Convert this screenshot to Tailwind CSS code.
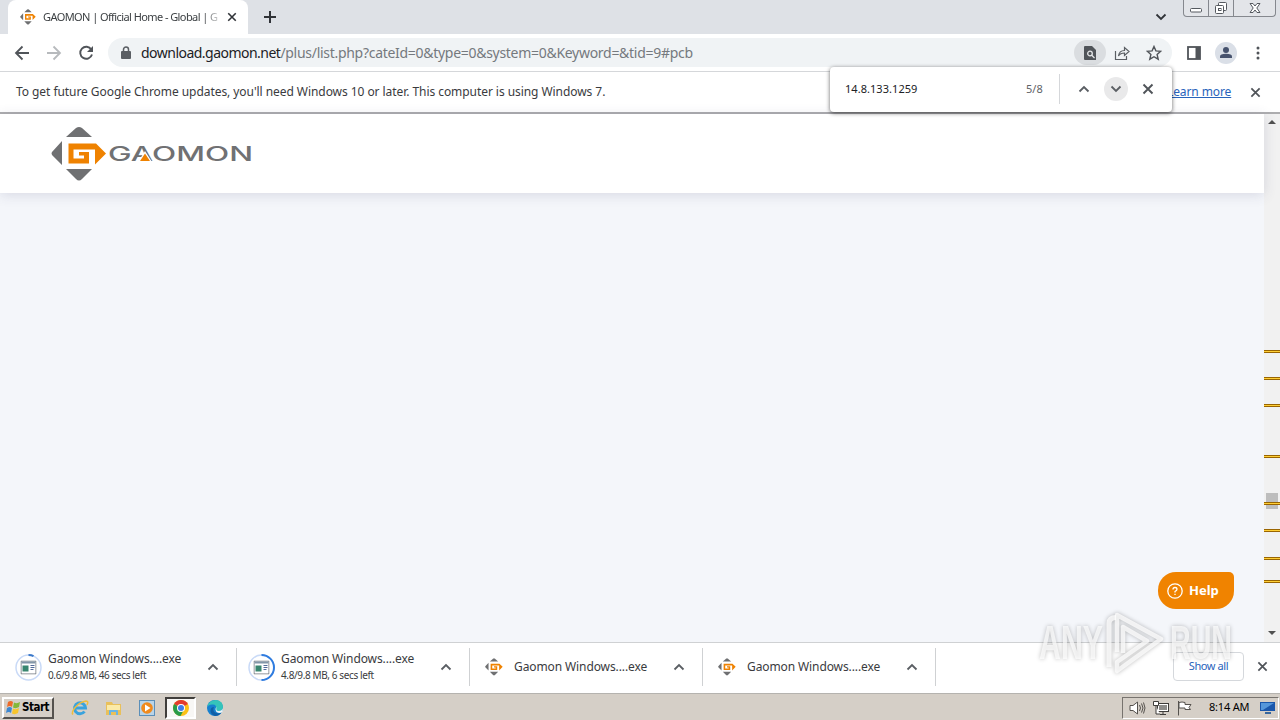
<!DOCTYPE html>
<html lang="en">
<head>
<meta charset="utf-8">
<title>GAOMON | Official Home - Global</title>
<script src="https://cdn.jsdelivr.net/npm/@tailwindcss/browser@4"></script>
</head>
<body class="w-[1280px] h-[720px] overflow-hidden bg-white font-['Noto_Sans','Open_Sans',sans-serif] text-[#3a3b3e]">
<svg class="hidden">
  <symbol id="mark" viewBox="0 0 56 56">
    <g fill="#6f7072"><path d="M15 11 25 2q3-2 6 0l10 9z"/><path d="M15 43h26L31 53q-3 3-6 0z"/><path d="M11 15v24L1 29q-1-2 0-3z"/></g>
    <path fill="#ef8200" d="M17.500 17.500H45L55 27.500 44 38.500V23.500H22.500V32.500H33V29.500H28v-3.500h10V37.500H17.500z"/>
  </symbol>
  <symbol id="up" viewBox="0 0 12 12"><path d="m1.500 8.500 4.500-4.500 4.500 4.500" fill="none" stroke="currentColor" stroke-width="1.800"/></symbol>
  <symbol id="x" viewBox="0 0 12 12"><path d="m1.500 1.500 9 9m0-9-9 9" fill="none" stroke="currentColor" stroke-width="1.900"/></symbol>
  <symbol id="app" viewBox="0 0 16 14"><path d="M.5.5h15v13H.5z" fill="#fff" stroke="#70777e"/><path d="M1 1h14v2H1z" fill="#8296a8"/><path d="M2 5h6v6H2z" fill="#38866f"/><path d="M10 5h4m-4 2h4m-4 2h3" stroke="#526a98"/></symbol>
</svg>
<div class="relative flex flex-col w-full h-full">
  <!-- tab strip -->
  <div class="flex h-[34px] bg-[#dee1e6]">
    <div class="flex items-center w-[240px] h-full ml-2 pl-3 bg-white rounded-t-lg">
      <svg class="size-4"><use href="#mark"/></svg>
      <div class="w-[176px] ml-[7px] overflow-hidden whitespace-nowrap text-[11px] leading-4 tracking-[-0.58px] text-[#3c4043] [mask-image:linear-gradient(to_right,black_160px,transparent_180px)]">GAOMON | Official Home - Global | G</div>
      <svg class="size-[10px] ml-[8px] text-[#303338]"><use href="#x"/></svg>
    </div>
    <svg class="w-3 h-3 ml-4 mt-[11px]" viewBox="0 0 12 12"><path d="M6 0v12M0 6h12" stroke="#303338" stroke-width="2"/></svg>
    <div class="flex-1"></div>
    <svg class="w-3 h-3 mt-[11px] mr-[16px] rotate-180 text-[#303338]"><use href="#up"/></svg>
    <div class="flex w-[93px] h-[17px] mr-1 border border-t-0 border-[#85888e] rounded-b bg-[#e3e5e9] text-[#55595f]">
      <div class="flex justify-center w-[25px] border-r border-[#85888e]"><svg class="w-3 h-4" viewBox="0 0 12 16"><rect x=".5" y="8.500" width="11" height="3.500" rx="1" fill="#fff" stroke="#55595f"/></svg></div>
      <div class="flex justify-center w-[25px] border-r border-[#85888e]"><svg class="w-[14px] h-4" viewBox="0 0 14 16" fill="#fff" stroke="#55595f"><rect x="4.500" y="2.500" width="8" height="8" rx="1"/><rect x="1.500" y="5.500" width="8" height="8" rx="1"/><rect x="4.500" y="8.500" width="2.500" height="2"/></svg></div>
      <div class="flex flex-1 justify-center"><svg class="w-3 h-4" viewBox="0 0 12 16"><path d="M1 3.500h3l2 2.500 2-2.500h3L7.800 8l3.200 4.500H8L6 10l-2 2.500H1L4.200 8z" fill="#fff" stroke="#55595f"/></svg></div>
    </div>
  </div>
  <!-- toolbar -->
  <div class="flex items-center h-[38px] px-[14px] border-b border-[#d5d7da] text-[#5a5e63]">
    <svg class="size-4" viewBox="0 0 16 16" fill="none" stroke="#505459" stroke-width="1.800"><path d="M15 8H2m6.500-6.500L2 8l6.500 6.500"/></svg>
    <svg class="size-4 ml-4" viewBox="0 0 16 16" fill="none" stroke="#b7babd" stroke-width="1.800"><path d="M1 8h13M7.500 1.500 14 8l-6.500 6.500"/></svg>
    <svg class="size-4 ml-4" viewBox="0 0 16 16"><path d="M13.300 4.500A6 6 0 1 0 14 9.500" fill="none" stroke="#505459" stroke-width="1.900"/><path d="M15 1v6H9z" fill="#505459"/></svg>
    <div class="flex items-center w-[1064px] h-[29px] ml-[14px] pl-3 rounded-full bg-[#f0f3f5]">
      <svg class="w-3 h-[14px]" viewBox="0 0 12 14"><rect x="1" y="5" width="10" height="8" rx="1" fill="#5a5e63"/><path d="M3.500 6V3.500a2.500 2.500 0 0 1 5 0V6" fill="none" stroke="#5a5e63" stroke-width="1.500"/></svg>
      <div class="flex-1 ml-[9px] whitespace-nowrap text-[14px] leading-5 tracking-[-0.29px] text-[#75797e]"><span class="text-[#202124] tracking-[-0.52px]">download.gaomon.net</span>/plus/list.php?cateId=0&amp;type=0&amp;system=0&amp;Keyword=&amp;tid=9#pcb</div>
      <div class="flex items-center justify-center w-8 h-[25px] rounded-full bg-[#dadde0]"><svg class="w-3 h-[14px]" viewBox="0 0 12 14"><path d="M1 0h7l4 4v10H1q-1 0-1-1V1q0-1 1-1z" fill="#505459"/><circle cx="6" cy="7.500" r="2.300" fill="none" stroke="#e4e6e8" stroke-width="1.300"/><path d="m7.500 9 3 3" stroke="#e4e6e8" stroke-width="1.300"/></svg></div>
      <svg class="w-4 h-4 ml-2" viewBox="0 0 16 16" fill="none" stroke="#5a5e63" stroke-width="1.200"><path d="M1.500 6v8.500h11V11M4.500 11c.5-4 2.500-5.500 6-5.500V2.500L15 6.500l-4.500 4V8C8 8 6 8.500 4.500 11z"/></svg>
      <svg class="w-4 h-4 ml-4 mr-[10px]" viewBox="0 0 16 16"><path d="m8 1.500 1.900 4.400 4.800.4-3.600 3.200 1.100 4.700L8 11.700l-4.200 2.500 1.100-4.700L1.300 6.300l4.800-.4z" fill="none" stroke="#505459" stroke-width="1.400"/></svg>
    </div>
    <svg class="w-[14px] h-[14px] ml-[15px]" viewBox="0 0 14 14"><rect x="1" y="1" width="12" height="12" fill="none" stroke="#505459" stroke-width="1.800"/><path d="M8.500 1H13v12H8.500z" fill="#505459"/></svg>
    <svg class="w-[22px] h-[22px] ml-[14px]" viewBox="0 0 22 22"><circle cx="11" cy="11" r="11" fill="#dadfe7"/><circle cx="11" cy="8" r="3" fill="#46526d"/><path d="M5 16v-1.500q0-2.700 6-2.700t6 2.700V16z" fill="#46526d"/></svg>
    <svg class="w-1 h-4 ml-[19px]" viewBox="0 0 4 16" fill="#505459"><circle cx="2" cy="3" r="1.500"/><circle cx="2" cy="8" r="1.500"/><circle cx="2" cy="13" r="1.500"/></svg>
  </div>
  <!-- update notice -->
  <div class="flex items-center h-[42px] pl-4 pr-[19px] border-b-2 border-[#adadaf] text-[12px]">
    <div class="flex-1 whitespace-nowrap tracking-[-0.06px]">To get future Google Chrome updates, you'll need Windows 10 or later. This computer is using Windows 7.</div>
    <div class="w-[64px] whitespace-nowrap text-right text-[#2863bb] underline tracking-[-0.1px]">Learn more</div>
    <svg class="size-[11px] ml-[19px] text-[#505459]"><use href="#x"/></svg>
  </div>
  <!-- page -->
  <div class="flex h-[528px]">
    <div class="relative flex-1 bg-[#f4f6fa]">
      <div class="flex h-[79px] pl-[51px] pt-[12px] bg-white shadow-[0_2px_12px_rgba(70,70,110,0.16)]">
        <svg class="w-14 h-14"><use href="#mark"/></svg>
        <svg class="w-[146px] h-7 mt-[14px] ml-[2px]" viewBox="0 0 146 28"><text x="-1" y="21" textLength="145" lengthAdjust="spacingAndGlyphs" font-family="Inter, sans-serif" font-size="19.500" font-weight="500" fill="#707173">GAOMON</text><path d="m36 11-7 11h14z" fill="#fff"/><path d="m36 13.500-5 7.500h10z" fill="#ef8200"/></svg>
      </div>
      <div class="absolute right-[30px] top-[458px] flex items-center w-[76px] h-[37px] pl-[9px] bg-[#f08300] text-white rounded-l-[18px] rounded-tr-[5px] rounded-br-[18px]">
        <svg class="size-4" viewBox="0 0 16 16"><circle cx="8" cy="8" r="7.200" fill="none" stroke="#fff" stroke-width="1.300"/><path d="M6 6.500q0-2 2-2t2 1.800Q10 7.300 8 8.500v1M8 10.700v1.300" fill="none" stroke="#fff" stroke-width="1.300"/></svg>
        <span class="ml-[6px] text-[13px] font-bold">Help</span>
      </div>
    </div>
    <svg class="w-4 h-[528px] bg-[#f1f1f1]" viewBox="0 0 16 528">
      <path d="m4 10 4-4 4 4zM4 517l4 4 4-4z" fill="#505050"/>
      <rect x="2" y="379" width="12" height="16" fill="#bdbdbd"/>
      <g fill="#9a6500"><path d="M0 236h16v3H0zM0 263h16v3H0zM0 290h16v3H0zM0 341h16v3H0zM0 388h16v3H0zM0 415h16v3H0zM0 443h16v3H0zM0 466h16v3H0z"/></g>
      <g fill="#ffcf35"><path d="M0 237h16v1H0zM0 264h16v1H0zM0 291h16v1H0zM0 342h16v1H0zM0 389h16v1H0zM0 416h16v1H0zM0 444h16v1H0zM0 467h16v1H0z"/></g>
    </svg>
  </div>
  <!-- downloads -->
  <div class="flex h-[51px] border-t border-[#cfd1d3] bg-white">
    <div class="flex items-center w-[237px] h-[38px] mt-[5px] pl-[15px] pr-[17px] border-r border-[#cfd1d3]">
      <svg class="size-[27px]" viewBox="0 0 27 27"><circle cx="13.500" cy="13.500" r="12.500" fill="none" stroke="#c9daf7" stroke-width="1.500"/><path d="M13.500 1q3 0 5 1.100" fill="none" stroke="#3a78c9" stroke-width="2"/><use href="#app" x="5.500" y="6.500" width="16" height="14"/></svg>
      <div class="flex-1 -mt-0.5 ml-[6px] whitespace-nowrap"><div class="text-[12px] leading-[17px] tracking-[-0.1px]">Gaomon Windows....exe</div><div class="text-[10px] leading-4 tracking-[-0.38px]">0.6/9.8 MB, 46 secs left</div></div>
      <svg class="size-3 text-[#5a5e63]"><use href="#up"/></svg>
    </div>
    <div class="flex items-center w-[233px] h-[38px] mt-[5px] pl-[11px] pr-[17px] border-r border-[#cfd1d3]">
      <svg class="size-[27px]" viewBox="0 0 27 27"><circle cx="13.500" cy="13.500" r="12.500" fill="none" stroke="#c9daf7" stroke-width="1.500"/><path d="M13.500 1a12.500 12.500 0 0 1 0 25" fill="none" stroke="#2f7cdf" stroke-width="2"/><use href="#app" x="5.500" y="6.500" width="16" height="14"/></svg>
      <div class="flex-1 -mt-0.5 ml-[6px] whitespace-nowrap"><div class="text-[12px] leading-[17px] tracking-[-0.1px]">Gaomon Windows....exe</div><div class="text-[10px] leading-4 tracking-[-0.38px]">4.8/9.8 MB, 6 secs left</div></div>
      <svg class="size-3 text-[#5a5e63]"><use href="#up"/></svg>
    </div>
    <div class="flex items-center w-[233px] h-[38px] mt-[5px] pl-[15px] pr-[17px] border-r border-[#cfd1d3]">
      <svg class="size-[18px]"><use href="#mark"/></svg>
      <div class="flex-1 ml-[11px] whitespace-nowrap text-[12px] tracking-[-0.1px]">Gaomon Windows....exe</div>
      <svg class="size-3 text-[#5a5e63]"><use href="#up"/></svg>
    </div>
    <div class="flex items-center w-[233px] h-[38px] mt-[5px] pl-[15px] pr-[17px] border-r border-[#cfd1d3]">
      <svg class="size-[18px]"><use href="#mark"/></svg>
      <div class="flex-1 ml-[11px] whitespace-nowrap text-[12px] tracking-[-0.1px]">Gaomon Windows....exe</div>
      <svg class="size-3 text-[#5a5e63]"><use href="#up"/></svg>
    </div>
    <div class="flex-1"></div>
    <div class="flex items-center justify-center w-[71px] h-[29px] mt-[9px] border border-[#d5d8dc] rounded text-[11px] text-[#2863bb] tracking-[-0.4px]">Show all</div>
    <svg class="size-[11px] mt-[18px] ml-[13px] mr-[12px] text-[#505459]"><use href="#x"/></svg>
  </div>
  <!-- taskbar -->
  <div class="flex items-center h-[27px] pl-[2px] pr-px pt-px bg-[#d5cfc7] border-t border-[#b5b3af]">
    <div class="flex items-center w-[52px] h-[22px] pl-[2px] border-2 border-t-white border-l-white border-r-[#55524e] border-b-[#55524e] font-['DejaVu_Sans_Condensed','DejaVu_Sans',sans-serif] text-[11.500px] font-bold tracking-[-0.5px] text-black">
      <svg class="w-[14px] h-[15px] mr-[2px] shrink-0" viewBox="0 0 14 15"><path d="M2 2q3-2 5 0L6 7Q4 5 1 7z" fill="#ee6a28"/><path d="M8 2.500q3 1.500 6-.5l-1 5q-3 2-6 .5z" fill="#83b83a"/><path d="M1 8q3-2 5 0l-1 5q-2-2-5 0z" fill="#3c87d1"/><path d="M7 8.500q3 1.500 6-.5l-1 5q-3 2-6 .5z" fill="#f7c52d"/></svg>Start
    </div>
    <svg class="w-[18px] h-[18px] ml-[17px]" viewBox="0 0 18 18"><path d="M13.500 12.500A5.500 5.500 0 1 1 14.500 9H5" fill="none" stroke="#3aa3dd" stroke-width="3"/><path d="M2 15.500C-1 13 7 3 15 2q3 0 1 4" fill="none" stroke="#efbd3d" stroke-width="1.500"/></svg>
    <svg class="w-[17px] h-4 ml-4" viewBox="0 0 17 16"><path d="M1 2h6l1 2h8v11H1z" fill="#e9c05a"/><path d="M2 5h13v5H2z" fill="#fbeaa8"/><path d="M4 15v-4q0-1 1-1h7q1 0 1 1v4h-2v-3H6v3z" fill="#69b5e4"/></svg>
    <svg class="w-4 h-4 ml-[17px]" viewBox="0 0 16 16"><rect x=".5" y=".5" width="15" height="15" fill="#b9d4e8" stroke="#5b8fb9"/><circle cx="8" cy="8" r="5.800" fill="#f08a1d"/><path d="m6 4.500 5.500 3.500L6 11.500z" fill="#fff"/></svg>
    <div class="flex items-center justify-center w-[31px] h-[22px] ml-[10px] border-2 border-t-[#403e3b] border-l-[#403e3b] border-r-white border-b-white bg-[#f8f7f5]"><svg class="size-4" viewBox="0 0 16 16"><circle cx="8" cy="8" r="8" fill="#fbc116"/><path d="M8 8 1.100 4A8 8 0 0 1 14.900 4z" fill="#e33b2e"/><path d="M8 8 1.100 4A8 8 0 0 0 7.500 16L11 9.500z" fill="#299b49"/><circle cx="8" cy="8" r="4" fill="#fff"/><circle cx="8" cy="8" r="3" fill="#3f7de8"/></svg></div>
    <svg class="w-4 h-4 ml-[11px]" viewBox="0 0 16 16"><circle cx="8" cy="8" r="8" fill="#1680cf"/><path d="M0 7Q2 0 9 0q7 1 7 7 0 4-5 4-2 0-2-2 1-5-4-4.500Q1 5 0 7z" fill="#35c4ba"/><path d="M7 7q-2 4 2 6 3 1 5.500-.5Q12 16 8 16q-5-2-4.500-6Q4 7 7 7z" fill="#105fa6"/><path d="M9.500 7q-1 4 2 4 3.500 0 4.500-3l-.5 4q-3 2-6 0Q7.500 9 9.500 7z" fill="#eef5f7"/></svg>
    <div class="flex-1"></div>
    <div class="flex items-center w-[157px] h-[22px] pl-[6px] border border-t-[#77736e] border-l-[#77736e] border-r-white border-b-white">
      <svg class="w-[17px] h-4" viewBox="0 0 17 16" stroke="#55524e" fill="none"><path d="M1 5.500h3L8.500 2v12L4 10.500H1z" fill="#fff"/><path d="M10.500 5q2 3 0 6M12.500 3.500q3 4.500 0 9M14.500 2.500q3 5.500 0 11"/></svg>
      <svg class="w-4 h-4 ml-[7px]" viewBox="0 0 16 16" stroke="#3f3d3a" fill="#fff"><rect x="4.500" y="3.500" width="11" height="8"/><path d="M6 5h8v5H6z" fill="#8d8c89" stroke="none"/><path d="M7 14.500h6M10 12v2.500M.5 1.500h5v4h-5zM3 6v8h4"/></svg>
      <svg class="w-4 h-4 ml-[8px]" viewBox="0 0 16 16" stroke="#55524e" fill="#fff"><path d="M1.500 1v14.500M2 2.500q3-1 6 0v2h6l-2 3 1.500 2H8v-1.500H2z"/></svg>
      <div class="w-[43px] ml-[16px] whitespace-nowrap text-[11px] tracking-[-0.2px] text-black">8:14 AM</div>
      <svg class="w-[15px] h-[14px] ml-[8px]" viewBox="0 0 15 14"><path d="M0 1h15v9H0z" fill="#1a57ab"/><path d="M1 2h13L3 9H1z" fill="#5597da"/><path d="M5 11h6v2H5z" fill="#37669d"/></svg>
    </div>
  </div>
  <!-- find bar -->
  <div class="absolute left-[830px] top-[67px] flex items-center w-[342px] h-[45px] pb-px pl-[15px] bg-white rounded shadow-[0_1px_4px_rgba(0,0,0,0.6)] text-[11px]">
    <div class="w-[181px] text-[#202124] tracking-[0.05px]">14.8.133.1259</div>
    <div class="w-[33px] text-[#5f6368]">5/8</div>
    <div class="w-px h-[30px] bg-[#d5d7da]"></div>
    <svg class="size-3 ml-[18px] text-[#5a5e63]"><use href="#up"/></svg>
    <div class="flex items-center justify-center size-6 ml-[14px] rounded-full bg-[#e9e9ea]"><svg class="size-3 rotate-180 text-[#5a5e63]"><use href="#up"/></svg></div>
    <svg class="size-3 ml-[14px] text-[#505459]"><use href="#x"/></svg>
  </div>
  <!-- watermark -->
  <svg class="absolute left-[1030px] top-[605px] w-[215px] h-[72px] drop-shadow-[0_0_2px_rgba(0,0,0,0.35)]" viewBox="0 0 215 72" fill="#fff" fill-opacity=".7" font-family="Liberation Sans, sans-serif" font-weight="bold" font-size="49">
    <text x="9" y="54" textLength="64" lengthAdjust="spacingAndGlyphs">ANY</text>
    <text x="140" y="54" textLength="62" lengthAdjust="spacingAndGlyphs">RUN</text>
    <g fill="none" stroke="#fff" stroke-opacity=".75" stroke-linejoin="round"><path d="M86 12.500q-7 0-7 6V62" stroke-width="5"/><path d="M87 47V10l44 24-44 32V57l30-21-24-14v26" stroke-width="4.500"/></g>
  </svg>
</div>
</body>
</html>
